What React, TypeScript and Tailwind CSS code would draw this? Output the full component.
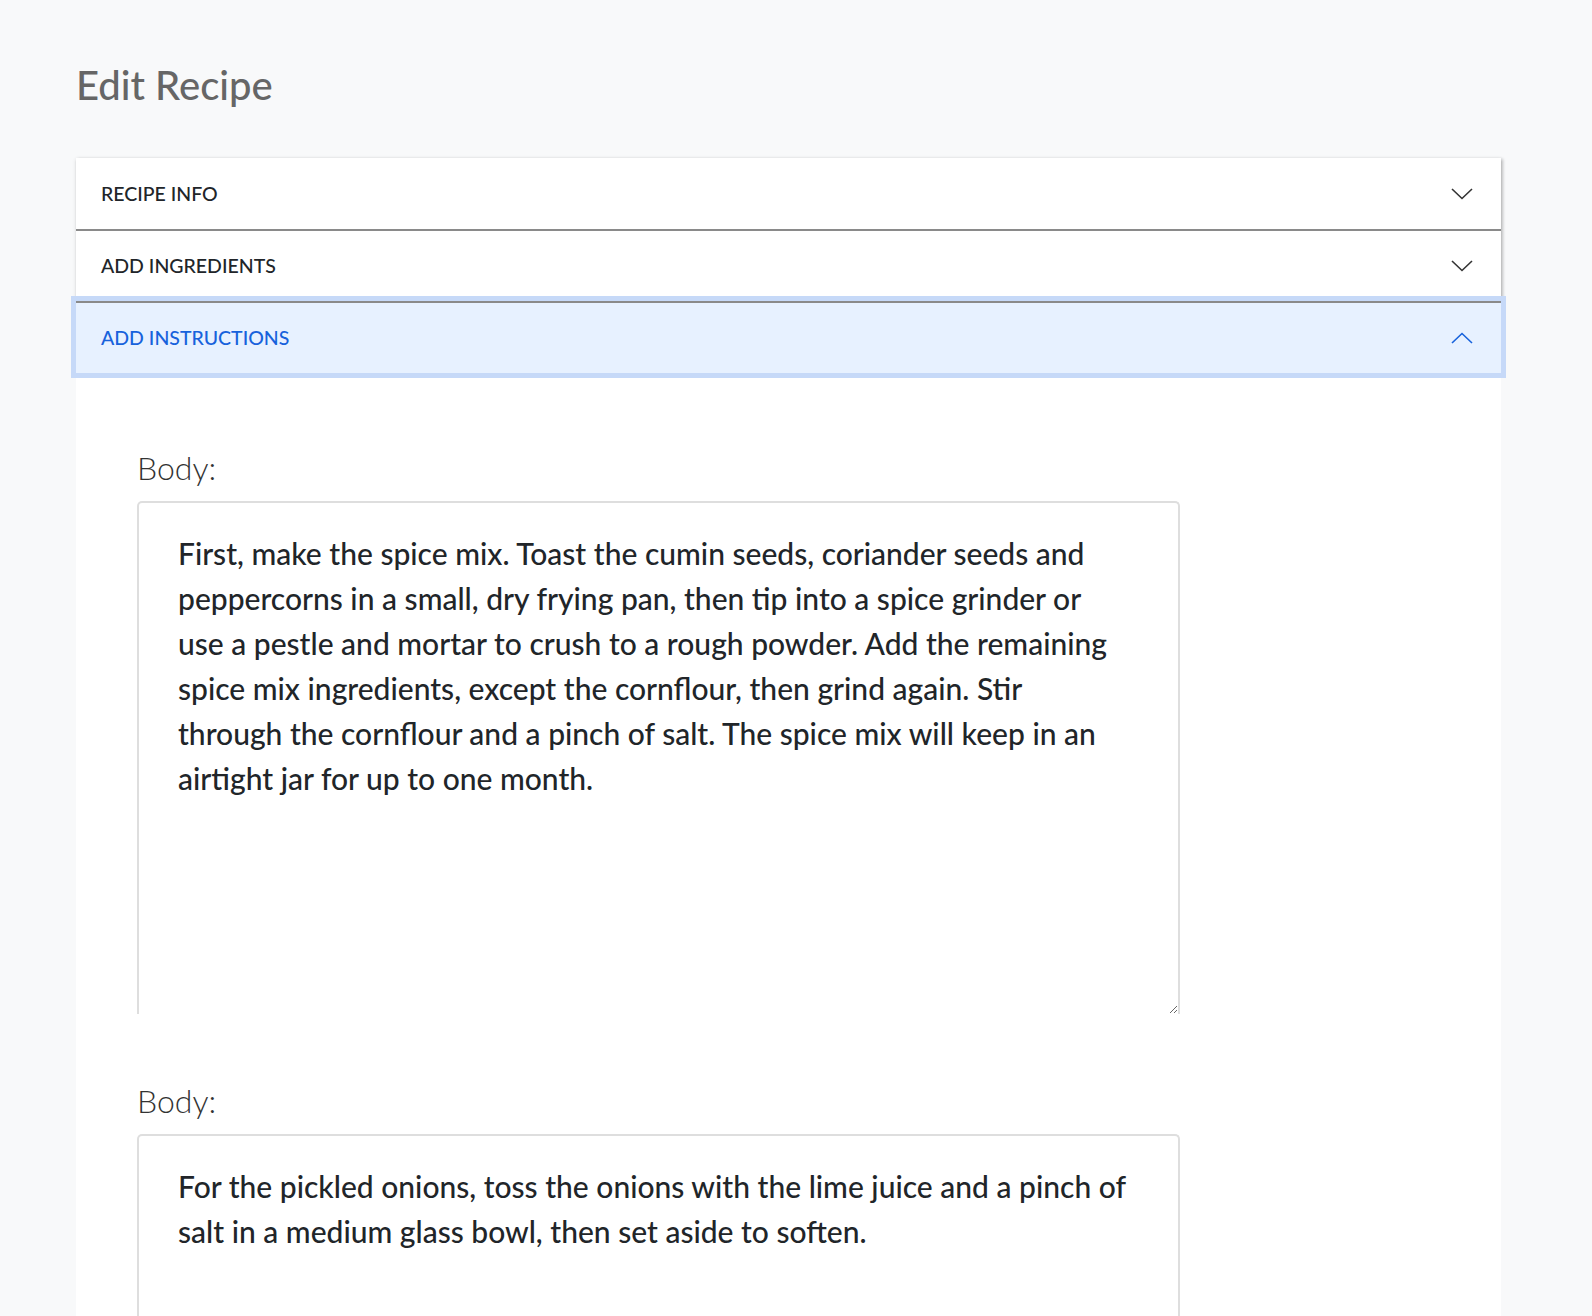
import React from "react";

const font = { fontFamily: "Lato, 'Open Sans', sans-serif" };

const stepOne = [
  "First, make the spice mix. Toast the cumin seeds, coriander seeds and",
  "peppercorns in a small, dry frying pan, then tip into a spice grinder or",
  "use a pestle and mortar to crush to a rough powder. Add the remaining",
  "spice mix ingredients, except the cornflour, then grind again. Stir",
  "through the cornflour and a pinch of salt. The spice mix will keep in an",
  "airtight jar for up to one month.",
].join("\n");

const stepTwo = [
  "For the pickled onions, toss the onions with the lime juice and a pinch of",
  "salt in a medium glass bowl, then set aside to soften.",
].join("\n");

const Chevron = ({ up, color }: { up?: boolean; color: string }) => (
  <svg width="22" height="12" viewBox="0 0 22 12" fill="none">
    <path
      d={up ? "M1 11L11 1.5L21 11" : "M1 1L11 10.5L21 1"}
      stroke={color}
      strokeWidth="1.6"
    />
  </svg>
);

const Header = ({
  label,
  open,
  className,
}: {
  label: string;
  open?: boolean;
  className?: string;
}) => (
  <button
    type="button"
    className={`flex w-full items-center justify-between pl-[25px] pr-[28px] text-left text-[19.5px] font-medium uppercase ${
      open ? "bg-[#e7f1ff] text-[#1762dc]" : "bg-white text-[#212529]"
    } ${className ?? ""}`}
  >
    <span>{label}</span>
    <Chevron up={open} color={open ? "#1762dc" : "#333"} />
  </button>
);

const BodyField = ({ value, first }: { value: string; first?: boolean }) => (
  <div className={first ? "" : "mt-[68px]"}>
    <label className="block text-[32px] font-light leading-[38px] text-[#333]">
      Body:
    </label>
    <textarea
      defaultValue={value}
      wrap="off"
      className="mt-[14px] block h-[513px] w-[1043px] overflow-hidden rounded-t-[5px] border-2 border-b-0 border-[#dedede] bg-white pl-[39px] pt-[28px] text-[30px] font-medium leading-[45px] whitespace-pre text-[#212529] outline-none"
      style={font}
    />
  </div>
);

export default function App() {
  return (
    <div className="min-h-screen bg-[#f8f9fa] pt-[60px]" style={font}>
      <h1 className="ml-[76px] text-[40px] font-medium leading-[50px] text-[#666]">
        Edit Recipe
      </h1>
      <div className="ml-[76px] mt-[48px] w-[1425px]">
        <div className="shadow-[0_2px_2px_-1px_rgba(0,0,0,0.25),2px_1px_3px_0_rgba(0,0,0,0.2),0_1px_4px_0_rgba(0,0,0,0.12)]">
          <Header label="Recipe Info" className="h-[71px]" />
          <div className="border-t-2 border-[#8a8a8a]">
            <Header label="Add Ingredients" className="h-[70px]" />
          </div>
          <div className="relative z-10 border-t-2 border-[#8a8a8a] shadow-[0_0_0_5px_#c6d9f8]">
            <Header label="Add Instructions" open className="h-[70px]" />
          </div>
        </div>
        <div className="bg-white pb-[40px] pl-[61px] pt-[76px]">
          <BodyField value={stepOne} first />
          <BodyField value={stepTwo} />
        </div>
      </div>
    </div>
  );
}
